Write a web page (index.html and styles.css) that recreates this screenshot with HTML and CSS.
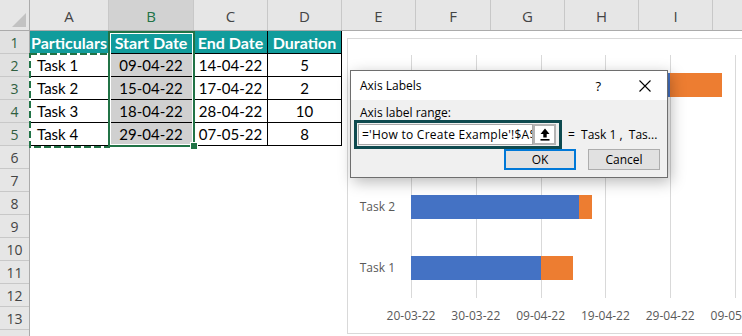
FILE: index.html
```html
<!DOCTYPE html>
<html>
<head>
<meta charset="utf-8">
<link rel="stylesheet" href="styles.css">
</head>
<body>
<div class="sheet">
  <div class="colheads">
    <div class="ch corner"><span class="tri"></span></div>
    <div class="ch wa">A</div>
    <div class="ch wb sel">B</div>
    <div class="ch wc">C</div>
    <div class="ch wd">D</div>
    <div class="ch we">E</div>
    <div class="ch wf">F</div>
    <div class="ch wg">G</div>
    <div class="ch wh">H</div>
    <div class="ch wi">I</div>
    <div class="ch wj"></div>
  </div>
  <div class="main">
    <div class="rowheads">
      <div class="rh on">1</div><div class="rh on">2</div><div class="rh on">3</div><div class="rh on">4</div><div class="rh on">5</div>
      <div class="rh">6</div><div class="rh">7</div><div class="rh">8</div><div class="rh">9</div><div class="rh">10</div>
      <div class="rh">11</div><div class="rh">12</div><div class="rh">13</div><div class="rh"></div>
    </div>
    <div class="cells">
      <div class="tbl">
        <div class="c hd">Particulars</div><div class="c hd">Start Date</div><div class="c hd">End Date</div><div class="c hd">Duration</div>
        <div class="c lt">Task 1</div><div class="c gr">09-04-22</div><div class="c">14-04-22</div><div class="c">5</div>
        <div class="c lt">Task 2</div><div class="c gr">15-04-22</div><div class="c">17-04-22</div><div class="c">2</div>
        <div class="c lt">Task 3</div><div class="c gr">18-04-22</div><div class="c">28-04-22</div><div class="c">10</div>
        <div class="c lt">Task 4</div><div class="c gr">29-04-22</div><div class="c">07-05-22</div><div class="c">8</div>
      </div>
      <svg class="ants" width="82" height="96" viewBox="0 0 82 96">
        <rect x="1" y="1" width="79" height="93" fill="none" stroke="#ffffff" stroke-width="2"/>
        <rect x="1" y="1" width="79" height="93" fill="none" stroke="#217346" stroke-width="2" stroke-dasharray="7 3"/>
      </svg>
      <div class="selbox"><span class="handle"></span></div>
    </div>
  </div>
</div>

<div class="chart">
  <div class="cats">
    <div class="cat"></div>
    <div class="cat"></div>
    <div class="cat">Task 2</div>
    <div class="cat">Task 1</div>
  </div>
  <div class="plot">
    <div class="row"><span class="blue" style="width:259.2px"></span><span class="orange" style="width:51.84px"></span></div>
    <div class="row"><span class="blue" style="width:187.92px"></span><span class="orange" style="width:64.8px"></span></div>
    <div class="row"><span class="blue" style="width:168.48px"></span><span class="orange" style="width:12.96px"></span></div>
    <div class="row"><span class="blue" style="width:129.6px"></span><span class="orange" style="width:32.4px"></span></div>
  </div>
  <div class="axis">
    <span class="tick">20-03-22</span>
    <span class="tick">30-03-22</span>
    <span class="tick">09-04-22</span>
    <span class="tick">19-04-22</span>
    <span class="tick">29-04-22</span>
    <span class="tick">09-05-22</span>
  </div>
</div>

<div class="dialog">
  <div class="dtitle">
    <span class="dname">Axis Labels</span>
    <span class="help">?</span>
    <svg class="close" width="12" height="12" viewBox="0 0 12 12"><path d="M0.5 0.5 L11.5 11.5 M11.5 0.5 L0.5 11.5" stroke="#000" stroke-width="1.1" fill="none"/></svg>
  </div>
  <div class="dbody">
    <div class="dlabel">Axis label range:</div>
    <div class="inrow">
      <div class="frame">
        <div class="field">='How to Create Example'!$A$2:$A$5</div>
        <div class="upbtn"><svg width="12" height="13" viewBox="0 0 12 13"><path d="M6 0.5 L1.5 6 H4.3 V9.5 H7.7 V6 H10.5 Z" fill="#000"/><rect x="1.5" y="11" width="9" height="1.6" fill="#000"/></svg></div>
      </div>
      <span class="preview">=&nbsp; Task 1 ,&nbsp; Tas...</span>
    </div>
    <div class="btns">
      <div class="btn ok">OK</div>
      <div class="btn">Cancel</div>
    </div>
  </div>
</div>
</body>
</html>
```

FILE: styles.css
```css
html, body {
  margin: 0;
  padding: 0;
}
body {
  width: 742px;
  height: 336px;
  overflow: hidden;
  background: #ffffff;
  position: relative;
  font-family: "Open Sans", "Noto Sans", sans-serif;
}
.sheet {
  width: 742px;
}
.colheads {
  display: flex;
  height: 31px;
  background: #e6e6e6;
  border-bottom: 1px solid #ababab;
  box-sizing: border-box;
}
.ch {
  box-sizing: border-box;
  height: 30px;
  border-right: 1px solid #c8c8c8;
  display: flex;
  align-items: center;
  justify-content: center;
  font-size: 15px;
  color: #444444;
  padding-top: 1px;
  flex: none;
}
.corner { width: 30px; position: relative; border-right: 1px solid #ababab; }
.tri {
  position: absolute;
  right: 3px;
  bottom: 3px;
  width: 0;
  height: 0;
  border-left: 14px solid transparent;
  border-bottom: 14px solid #c2c2c2;
}
.wa { width: 79px; }
.wb { width: 85px; }
.wc { width: 74px; }
.wd { width: 74px; }
.we { width: 74px; }
.wf { width: 75px; }
.wg { width: 74px; }
.wh { width: 74px; }
.wi { width: 74px; }
.wj { flex: 1; border-right: none; }
.ch.sel {
  background: #d2d2d2;
  color: #217346;
}
.main {
  display: flex;
}
.rowheads {
  width: 30px;
  flex: none;
  background: #e6e6e6;
  border-right: 1px solid #ababab;
  box-sizing: border-box;
}
.rh {
  height: 23px;
  box-sizing: border-box;
  border-bottom: 1px solid #c8c8c8;
  display: flex;
  align-items: center;
  justify-content: center;
  font-size: 14px;
  color: #444444;
}
.rh.on {
  background: #e1e1e1;
  color: #2f5f3f;
}
.cells {
  position: relative;
  flex: 1;
}
.tbl {
  display: grid;
  grid-template-columns: 79px 85px 74px 74px;
  grid-auto-rows: 23px;
  width: 312px;
}
.c {
  box-sizing: border-box;
  border-right: 1px solid #000;
  border-bottom: 1px solid #000;
  display: flex;
  align-items: center;
  justify-content: center;
  font-family: "Lato", "Liberation Sans", sans-serif;
  font-size: 15px;
  color: #000;
}
.c.hd {
  background: #119c9c;
  color: #ffffff;
  font-weight: bold;
  font-size: 16px;
}
.c.lt {
  justify-content: flex-start;
  padding-left: 7px;
}
.c.gr {
  background: #d0d0d0;
}
.ants {
  position: absolute;
  left: -1px;
  top: 22px;
}
.selbox {
  position: absolute;
  left: 78px;
  top: 0;
  width: 87px;
  height: 116px;
  box-sizing: border-box;
  border: 2px solid #217346;
  box-shadow: inset 0 0 0 1px #ffffff;
}
.handle {
  position: absolute;
  right: -5px;
  bottom: -5px;
  width: 6px;
  height: 6px;
  background: #217346;
  border: 1px solid #ffffff;
}

/* chart */
.chart {
  position: absolute;
  left: 347px;
  top: 38px;
  width: 420px;
  height: 296px;
  box-sizing: border-box;
  border: 1px solid #d9d9d9;
  background: #ffffff;
  display: grid;
  grid-template-columns: 63px 1fr;
  grid-template-rows: 243px auto;
  padding-top: 16px;
  color: #595959;
  font-size: 12px;
}
.cats {
  display: flex;
  flex-direction: column;
}
.cat {
  height: 60.75px;
  display: flex;
  align-items: center;
  justify-content: flex-end;
  padding-right: 16px;
}
.plot {
  display: flex;
  flex-direction: column;
  background: repeating-linear-gradient(to right, #d9d9d9 0 1px, transparent 1px 64.8px);
}
.row {
  height: 60.75px;
  display: flex;
  align-items: center;
}
.blue, .orange {
  height: 24px;
  display: block;
}
.blue { background: #4472c4; }
.orange { background: #ed7d31; }
.axis {
  grid-column: 2;
  display: flex;
  padding-top: 9px;
  margin-left: -32.4px;
}
.tick {
  width: 64.8px;
  flex: none;
  text-align: center;
  white-space: nowrap;
}

/* dialog */
.dialog {
  position: absolute;
  left: 350px;
  top: 70px;
  width: 318px;
  height: 108px;
  box-sizing: border-box;
  border: 1px solid #6e6e6e;
  background: #f0f0f0;
  box-shadow: 3px 4px 14px rgba(0,0,0,0.28);
  font-size: 12px;
  color: #000;
}
.dtitle {
  height: 29px;
  background: #ffffff;
  display: flex;
  align-items: center;
  padding-left: 9px;
}
.dname { flex: 1; }
.help {
  font-size: 13px;
  margin-right: 38px;
}
.close {
  margin-right: 16px;
}
.dbody {
  padding-top: 5px;
}
.dlabel {
  padding-left: 9px;
  height: 15px;
  line-height: 15px;
}
.inrow {
  display: flex;
  align-items: center;
  margin-left: 3px;
}
.frame {
  display: flex;
  align-items: center;
  width: 208px;
  height: 29px;
  box-sizing: border-box;
  border: 3px solid #0e4a4f;
  background: #f0f0f0;
  padding: 0 3px 0 1px;
}
.field {
  width: 176px;
  height: 21px;
  box-sizing: border-box;
  border: 1px solid #a8a8a8;
  background: #ffffff;
  overflow: hidden;
  white-space: nowrap;
  padding-left: 3px;
  line-height: 19px;
  letter-spacing: 0.25px;
}
.upbtn {
  width: 23px;
  height: 21px;
  box-sizing: border-box;
  border: 2px solid #b4b4b4;
  background: #ffffff;
  display: flex;
  align-items: center;
  justify-content: center;
}
.preview {
  margin-left: 6px;
  white-space: nowrap;
}
.btns {
  display: flex;
  justify-content: flex-end;
  gap: 12px;
  padding-right: 7px;
}
.btn {
  width: 72px;
  height: 21px;
  box-sizing: border-box;
  border: 1px solid #adadad;
  background: #e1e1e1;
  display: flex;
  align-items: center;
  justify-content: center;
}
.btn.ok {
  border: 2px solid #0078d7;
}
```
